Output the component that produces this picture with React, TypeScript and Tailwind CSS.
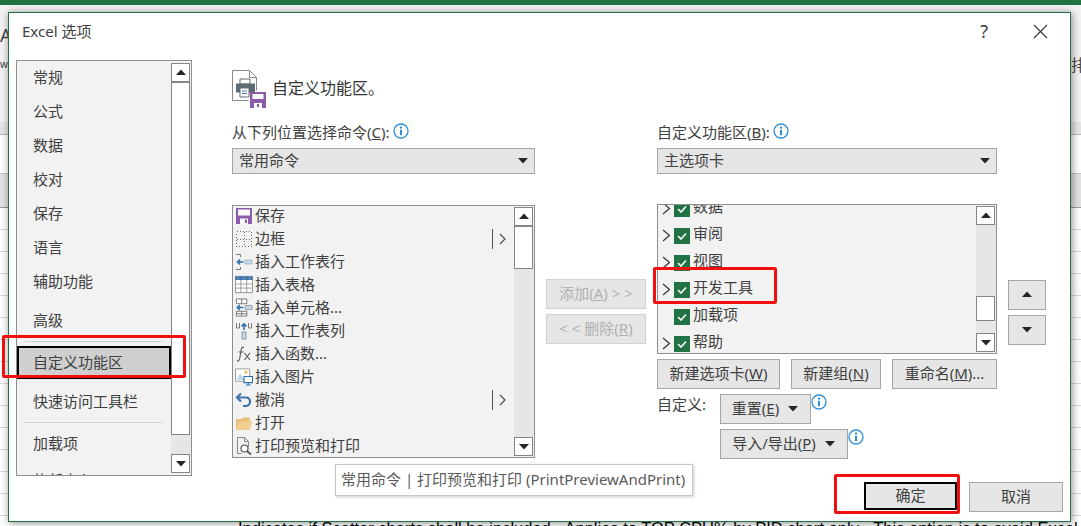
import type { ReactNode } from 'react'

const sideItems = ['常规', '公式', '数据', '校对', '保存', '语言', '辅助功能']

function Tri({ down = false }: { down?: boolean }) {
  return (
    <svg width="12" height="7" viewBox="0 0 12 7" className="shrink-0">
      <path d={down ? 'M1 1h10L6 6.5z' : 'M1 6h10L6 .5z'} fill="#262626" />
    </svg>
  )
}

function ScrollBtn({ down = false }: { down?: boolean }) {
  return (
    <div className="flex h-[19px] w-[19px] shrink-0 items-center justify-center border border-[#858585] bg-white">
      <Tri down={down} />
    </div>
  )
}

function Scrollbar({ before, thumb }: { before: number; thumb: number }) {
  return (
    <div className="flex h-full w-[20px] shrink-0 flex-col py-[1px]">
      <ScrollBtn />
      <div className="flex flex-1 flex-col bg-[#e6e6e6]">
        <div style={{ height: before }} />
        <div className="w-[19px] border border-[#858585] bg-white" style={{ height: thumb }} />
      </div>
      <ScrollBtn down />
    </div>
  )
}

function Info() {
  return (
    <svg width="16" height="16" viewBox="0 0 16 16" className="shrink-0">
      <circle cx="8" cy="8" r="7" fill="#fff" stroke="#2f8fd8" strokeWidth="1.3" />
      <rect x="7" y="3.6" width="2" height="2" fill="#2f8fd8" />
      <rect x="7" y="6.8" width="2" height="5.4" fill="#2f8fd8" />
    </svg>
  )
}

function Btn({ children, className = '' }: { children: ReactNode; className?: string }) {
  return (
    <div className={`flex h-[30px] shrink-0 items-center justify-center border border-[#a6a6a6] bg-[#e6e6e6] pb-[2px] text-[15px] leading-[20px] text-[#404040] ${className}`}>
      {children}
    </div>
  )
}

function Select({ label }: { label: string }) {
  return (
    <div className="mt-[7px] flex h-[26px] items-center justify-between border border-[#a6a6a6] bg-[#e6e6e6] pb-[2px] pl-[6px] pr-[5px] text-[15px] leading-[20px] text-[#404040]">
      <span>{label}</span>
      <Tri down />
    </div>
  )
}

function Flyout() {
  return (
    <div className="flex items-center pr-[8px]">
      <div className="mr-[6px] h-[20px] w-[1px] bg-[#555]" />
      <svg width="7" height="12" viewBox="0 0 7 12">
        <path d="M1 1l5 5-5 5" fill="none" stroke="#444" strokeWidth="1.1" />
      </svg>
    </div>
  )
}

function Chevron({ hidden = false }: { hidden?: boolean }) {
  return (
    <svg width="9" height="13" viewBox="0 0 9 13" className={`mt-[6px] shrink-0 ${hidden ? 'invisible' : ''}`}>
      <path d="M1 1l6.5 5.5L1 12" fill="none" stroke="#333" strokeWidth="1.2" />
    </svg>
  )
}

function Check() {
  return (
    <div className="ml-[3px] mt-[7px] flex h-[16px] w-[16px] shrink-0 items-center justify-center bg-[#217346]">
      <svg width="10" height="8" viewBox="0 0 10 8">
        <path d="M1 4l3 3 5-5.5" fill="none" stroke="#fff" strokeWidth="1.6" />
      </svg>
    </div>
  )
}

function TreeRow({ label, noChevron = false }: { label: string; noChevron?: boolean }) {
  return (
    <div className="flex h-[27px] shrink-0 items-center pl-[4px] text-[15px] leading-[20px] text-[#404040]">
      <Chevron hidden={noChevron} />
      <Check />
      <span className="ml-[3px]">{label}</span>
    </div>
  )
}

const Floppy = () => (
  <svg width="18" height="18" viewBox="0 0 18 18">
    <path d="M1 1h16v16H1z" fill="#8c5ca8" />
    <path d="M3 2.5h12v6H3z" fill="#fff" />
    <path d="M5 11.5h8V17H5z" fill="#fff" />
    <path d="M10 12.5h2V16h-2z" fill="#8c5ca8" />
  </svg>
)

const BorderIcon = () => (
  <svg width="18" height="18" viewBox="0 0 18 18" shapeRendering="crispEdges">
    <path d="M1.5 1.5h15v15h-15zM9.5 1.5v15M1.5 9.500h15" fill="none" stroke="#666" strokeWidth="1" strokeDasharray="1 2" />
  </svg>
)

const InsertRow = () => (
  <svg width="18" height="18" viewBox="0 0 18 18">
    <path d="M1 1.5h4.5M5.5 1.5v2.5M1 16.5h4.5M5.5 16.5V14" fill="none" stroke="#777" />
    <path d="M10 7h7v4h-7z" fill="#c5d9ee" stroke="#8aa" strokeWidth=".6" />
    <path d="M8.5 9H2.5M5 6.5L2.5 9 5 11.5" fill="none" stroke="#2f6fb0" strokeWidth="1.6" />
  </svg>
)

const TableIcon = () => (
  <svg width="20" height="19" viewBox="0 0 20 19">
    <path d="M.5.5h19v18H.5z" fill="#fff" stroke="#888" />
    <path d="M.5.5h19v4H.5z" fill="#3f74ad" />
    <path d="M6.5 4.5v14M13 4.5v14M.5 9h19M.5 13.5h19" fill="none" stroke="#999" />
    <path d="M3 2h1v1H3zM9.500 2h1v1h-1zM16 2h1v1h-1z" fill="#fff" />
  </svg>
)

const InsertCell = () => (
  <svg width="19" height="19" viewBox="0 0 19 19">
    <path d="M1.500.5h11v5h-11zM7 .5v5M1.500 13.500h11v5h-11zM7 13.500v5M1.500 16h11" fill="#fff" stroke="#777" />
    <path d="M11 7.500h7v4h-7z" fill="#c5d9ee" stroke="#777" strokeWidth=".7" />
    <path d="M9 9.500H2.500M5 7L2.500 9.500 5 12" fill="none" stroke="#2f6fb0" strokeWidth="1.600" />
  </svg>
)

const InsertCol = () => (
  <svg width="18" height="18" viewBox="0 0 18 18">
    <path d="M1.500 1v5h3V1M13.500 1v5h3V1" fill="none" stroke="#777" />
    <path d="M9 8V2M6.500 4.500L9 2l2.500 2.500" fill="none" stroke="#2f6fb0" strokeWidth="1.600" />
    <path d="M7 10h4v7H7z" fill="#c5d9ee" stroke="#777" strokeWidth=".7" />
  </svg>
)

const Fx = () => (
  <svg width="18" height="18" viewBox="0 0 18 18">
    <path d="M9 2.500C7.500 1.500 6.500 2.500 6.200 4.500L4.700 13.500C4.300 15.800 3.200 16.500 1.800 15.800M3.700 7h5" fill="none" stroke="#555" strokeWidth="1.100" />
    <path d="M9.500 8l5.500 7M15 8l-5.500 7" fill="none" stroke="#555" strokeWidth="1.100" />
  </svg>
)

const ImageIcon = () => (
  <svg width="19" height="19" viewBox="0 0 19 19">
    <path d="M.5 1.500h15v13H.5z" fill="#fff" stroke="#999" />
    <path d="M2 13l3.500-7 4 7z" fill="#bcd2e8" />
    <circle cx="11.500" cy="5" r="1.800" fill="#f2c26b" />
    <path d="M9.500 9.500h9v6.500h-9z" fill="#fff" stroke="#2f6fb0" strokeWidth="1.200" />
    <path d="M14 16v2.500M11.500 18.500h5" fill="none" stroke="#2f6fb0" strokeWidth="1.200" />
  </svg>
)

const Undo = () => (
  <svg width="18" height="18" viewBox="0 0 18 18">
    <path d="M6 2.500L2 6.500l4 4" fill="none" stroke="#3f74ad" strokeWidth="2.200" />
    <path d="M2.500 6.500H11c5 0 5.500 7.500.5 8.500H8" fill="none" stroke="#3f74ad" strokeWidth="2.200" />
  </svg>
)

const Folder = () => (
  <svg width="18" height="18" viewBox="0 0 18 18">
    <path d="M1 5V15h14V3.500H8L6.500 5z" fill="#e9c07a" />
    <path d="M1 16h14l2.500-8.500H4z" fill="#f3cf93" />
  </svg>
)

const Preview = () => (
  <svg width="18" height="18" viewBox="0 0 18 18">
    <path d="M2.500.5h7l4 4V10M2.500.5v16h4" fill="none" stroke="#888" />
    <path d="M9.500.5v4h4" fill="none" stroke="#888" />
    <circle cx="9.500" cy="11.500" r="3.500" fill="#fff" stroke="#555" strokeWidth="1.200" />
    <path d="M12 14l4 3.500" stroke="#555" strokeWidth="1.800" />
  </svg>
)

const HeadIcon = () => (
  <svg width="34" height="38" viewBox="0 0 34 38">
    <path d="M.5.5h17l7 7v13M.5.500v30h16" fill="#fff" stroke="#8a8a8a" />
    <path d="M17.500.5v7h7" fill="none" stroke="#8a8a8a" />
    <path d="M8 9h10v5H8z" fill="#fff" stroke="#666" />
    <path d="M4 13.500h19v9H4z" fill="#5f6b73" />
    <path d="M8 18h9v9H8z" fill="#fff" stroke="#5f6b73" />
    <path d="M10 21h5M10 23.500h5" stroke="#3f74ad" />
    <path d="M18 22h16v16H18z" fill="#8c5ca8" />
    <path d="M20.500 24h11v5h-11z" fill="#fff" />
    <path d="M22 33h8v5h-8z" fill="#fff" />
    <path d="M25 34h2v3h-2z" fill="#8c5ca8" />
  </svg>
)

const commands: { label: string; icon: ReactNode; flyout?: boolean }[] = [
  { label: '保存', icon: <Floppy /> },
  { label: '边框', icon: <BorderIcon />, flyout: true },
  { label: '插入工作表行', icon: <InsertRow /> },
  { label: '插入表格', icon: <TableIcon /> },
  { label: '插入单元格...', icon: <InsertCell /> },
  { label: '插入工作表列', icon: <InsertCol /> },
  { label: '插入函数...', icon: <Fx /> },
  { label: '插入图片', icon: <ImageIcon /> },
  { label: '撤消', icon: <Undo />, flyout: true },
  { label: '打开', icon: <Folder /> },
  { label: '打印预览和打印', icon: <Preview /> },
]

function SideItem({ label }: { label: string }) {
  return <div className="flex h-[34px] shrink-0 items-center pl-[16px]">{label}</div>
}

function SideSep({ height }: { height: string }) {
  return (
    <div className={`shrink-0 ${height}`}>
      <div className="ml-[8px] mt-[4px] h-[1px] w-[137px] bg-[#d2d2d2]" />
    </div>
  )
}

export default function App() {
  return (
    <div className="relative h-[526px] w-[1081px] overflow-hidden bg-white font-['Noto_Sans','Noto_Sans_CJK_SC',sans-serif]">
      {/* excel behind the dialog */}
      <div className="h-[5px] bg-[#217346]" />
      <div className="flex h-[117px] justify-between bg-[#f3f3f3] text-[15px] leading-[20px] text-[#444]">
        <div className="w-[8px] overflow-hidden">
          <div className="mt-[19px] text-[18px] leading-[22px]">A</div>
          <div className="mt-[12px] text-[10px] leading-[12px]">w</div>
        </div>
        <span className="mt-[50px] w-[10px] overflow-hidden whitespace-nowrap text-[16px] leading-[20px]">排</span>
      </div>
      <div className="h-[13px] border-b border-[#b8b8b8] bg-[#e6e6e6]" />
      <div className="h-[39px] border-b border-[#c4c4c4]" />
      <div className="h-[34px] border-b border-[#9a9a9a] bg-[#e2e2e2]" />
      <div className="h-[318px] bg-[repeating-linear-gradient(to_bottom,#fff_0,#fff_21px,#d9d9d9_21px,#d9d9d9_22px)]" />
      <div className="absolute left-[238px] top-[519px] whitespace-nowrap font-['Liberation_Sans',sans-serif] text-[16.5px] leading-[19px] text-black">
        Indicates if Scatter charts shall be included - Applies to TOP CPU% by PID chart only - This option is to avoid Excel
      </div>

      {/* dialog */}
      <div className="absolute left-[8px] top-[12px] h-[510px] w-[1063px] border border-[#217346] bg-white text-[#404040] shadow-[1px_1px_8px_rgba(0,0,0,0.45)]">
        <div className="flex h-[47px] items-start justify-between pl-[13px] pr-[22px] pt-[6px]">
          <span className="text-[15px] leading-[24px] text-[#404040]">Excel 选项</span>
          <div className="flex items-center">
            <span className="mr-[45px] text-[18px] leading-[24px]">?</span>
            <svg width="15" height="15" viewBox="0 0 15 15">
              <path d="M1 1l13 13M14 1L1 14" stroke="#333" strokeWidth="1.100" />
            </svg>
          </div>
        </div>

        <div className="flex">
          {/* category list */}
          <div className="ml-[7px] flex h-[416px] w-[176px] shrink-0 overflow-hidden border border-[#8f8f8f] bg-[#f2f2f2]">
            <div className="flex w-[154px] shrink-0 flex-col text-[15px] leading-[20px]">
              <div className="-mt-[1px] flex shrink-0 flex-col">
                {sideItems.map((item) => (
                  <SideItem key={item} label={item} />
                ))}
              </div>
              <div className="mt-[5px] shrink-0">
                <SideItem label="高级" />
              </div>
              <SideSep height="h-[9px]" />
              <div className="flex h-[33px] shrink-0 items-center border-2 border-black bg-[#cfcfcf] pb-[2px] pl-[14px]">自定义功能区</div>
              <div className="mt-[5px] shrink-0">
                <SideItem label="快速访问工具栏" />
              </div>
              <SideSep height="h-[8px]" />
              <SideItem label="加载项" />
              <div className="mt-[3px] shrink-0">
                <SideItem label="信任中心" />
              </div>
            </div>
            <div className="h-full py-[1px]">
              <Scrollbar before={0} thumb={353} />
            </div>
          </div>

          <div className="ml-[40px] flex-1 pr-[7px]">
            <div className="mt-[10px] flex h-[38px] items-center">
              <HeadIcon />
              <span className="mb-[2px] ml-[6px] text-[16px] leading-[22px] text-[#333]">自定义功能区。</span>
            </div>

            <div className="mt-[15px] flex">
              {/* from commands */}
              <div className="w-[303px] shrink-0">
                <div className="flex h-[18px] items-center text-[15px] leading-[18px]">
                  <span>从下列位置选择命令(<u>C</u>):</span>
                  <span className="ml-[3px] -mt-[3px]"><Info /></span>
                </div>
                <Select label="常用命令" />
                <div className="mt-[31px] flex h-[253px] overflow-hidden border border-[#8f8f8f] bg-[#f2f2f2]">
                  <div className="min-w-0 flex-1">
                    <div className="-mt-[2px]">
                      {commands.map((c) => (
                        <div key={c.label} className="flex h-[23px] items-center justify-between pl-[2px] text-[15px] leading-[20px]">
                          <div className="flex items-center">
                            <span className="flex w-[18px] justify-center">{c.icon}</span>
                            <span className="mb-[2px] ml-[2px]">{c.label}</span>
                          </div>
                          {c.flyout && <Flyout />}
                        </div>
                      ))}
                    </div>
                  </div>
                  <Scrollbar before={0} thumb={43} />
                </div>
              </div>

              {/* add / remove */}
              <div className="ml-[11px] mt-[156px] flex w-[100px] shrink-0 flex-col gap-[5px]">
                <div className="flex h-[30px] items-center justify-center whitespace-pre border border-[#d2d2d2] bg-[#e6e6e6] pb-[2px] text-[15px] leading-[20px] text-[#b1b1b1]">
                  添加(<u>A</u>) {'> >'}
                </div>
                <div className="flex h-[30px] items-center justify-center whitespace-pre border border-[#d2d2d2] bg-[#e6e6e6] pb-[2px] text-[15px] leading-[20px] text-[#b1b1b1]">
                  {'< <'} 删除(<u>R</u>)
                </div>
              </div>

              {/* ribbon tabs */}
              <div className="ml-[11px] w-[340px] shrink-0">
                <div className="flex h-[18px] items-center text-[15px] leading-[18px]">
                  <span>自定义功能区(<u>B</u>):</span>
                  <span className="ml-[3px] -mt-[3px]"><Info /></span>
                </div>
                <Select label="主选项卡" />
                <div className="mt-[30px] flex h-[150px] overflow-hidden border border-[#8f8f8f] bg-[#f2f2f2]">
                  <div className="min-w-0 flex-1">
                    <div className="-mt-[13px]">
                      <TreeRow label="数据" />
                      <TreeRow label="审阅" />
                      <TreeRow label="视图" />
                      <TreeRow label="开发工具" />
                      <TreeRow label="加载项" noChevron />
                      <TreeRow label="帮助" />
                    </div>
                  </div>
                  <Scrollbar before={71} thumb={25} />
                </div>
                <div className="mt-[5px] flex justify-between">
                  <Btn className="w-[123px]"><span>新建选项卡(<u>W</u>)</span></Btn>
                  <Btn className="w-[90px]"><span>新建组(<u>N</u>)</span></Btn>
                  <Btn className="w-[105px]"><span>重命名(<u>M</u>)...</span></Btn>
                </div>
                <div className="mt-[5px] flex">
                  <span className="w-[63px] text-[15px] leading-[20px]">自定义:</span>
                  <div className="flex flex-col gap-[5px]">
                    <div className="flex items-start">
                      <Btn className="w-[91px] gap-[8px]">
                        <span>重置(<u>E</u>)</span>
                        <Tri down />
                      </Btn>
                      <Info />
                    </div>
                    <div className="flex items-start">
                      <Btn className="w-[128px] gap-[8px]">
                        <span>导入/导出(<u>P</u>)</span>
                        <Tri down />
                      </Btn>
                      <Info />
                    </div>
                  </div>
                </div>
              </div>

              {/* move up / down */}
              <div className="ml-[11px] mt-[157px] flex w-[38px] shrink-0 flex-col gap-[5px]">
                <Btn className="h-[29px]"><Tri /></Btn>
                <Btn className="h-[29px]"><Tri down /></Btn>
              </div>
            </div>

            <div className="mt-[23px] flex justify-end gap-[12px]">
              <div className="flex h-[28px] w-[93px] items-center justify-center border-2 border-black bg-[#e6e6e6] pb-[2px] text-[15px] leading-[20px]">确定</div>
              <Btn className="h-[28px] w-[94px]">取消</Btn>
            </div>
          </div>
        </div>
      </div>

      {/* tooltip */}
      <div className="absolute left-[335px] top-[464px] flex h-[32px] w-[358px] items-center border border-[#c8c8c8] bg-white pb-[2px] pl-[5px] text-[15px] leading-[20px] text-[#5a5a5a] shadow-[1px_1px_3px_rgba(0,0,0,0.2)]">
        常用命令 | 打印预览和打印 (PrintPreviewAndPrint)
      </div>

      {/* red annotation boxes */}
      <div className="absolute left-[2px] top-[335px] h-[43px] w-[184px] rounded-[2px] border-[3px] border-[#f01010]" />
      <div className="absolute left-[653px] top-[267px] h-[37px] w-[124px] rounded-[2px] border-[3px] border-[#f01010]" />
      <div className="absolute left-[834px] top-[474px] h-[40px] w-[126px] rounded-[2px] border-[3px] border-[#f01010]" />
    </div>
  )
}
